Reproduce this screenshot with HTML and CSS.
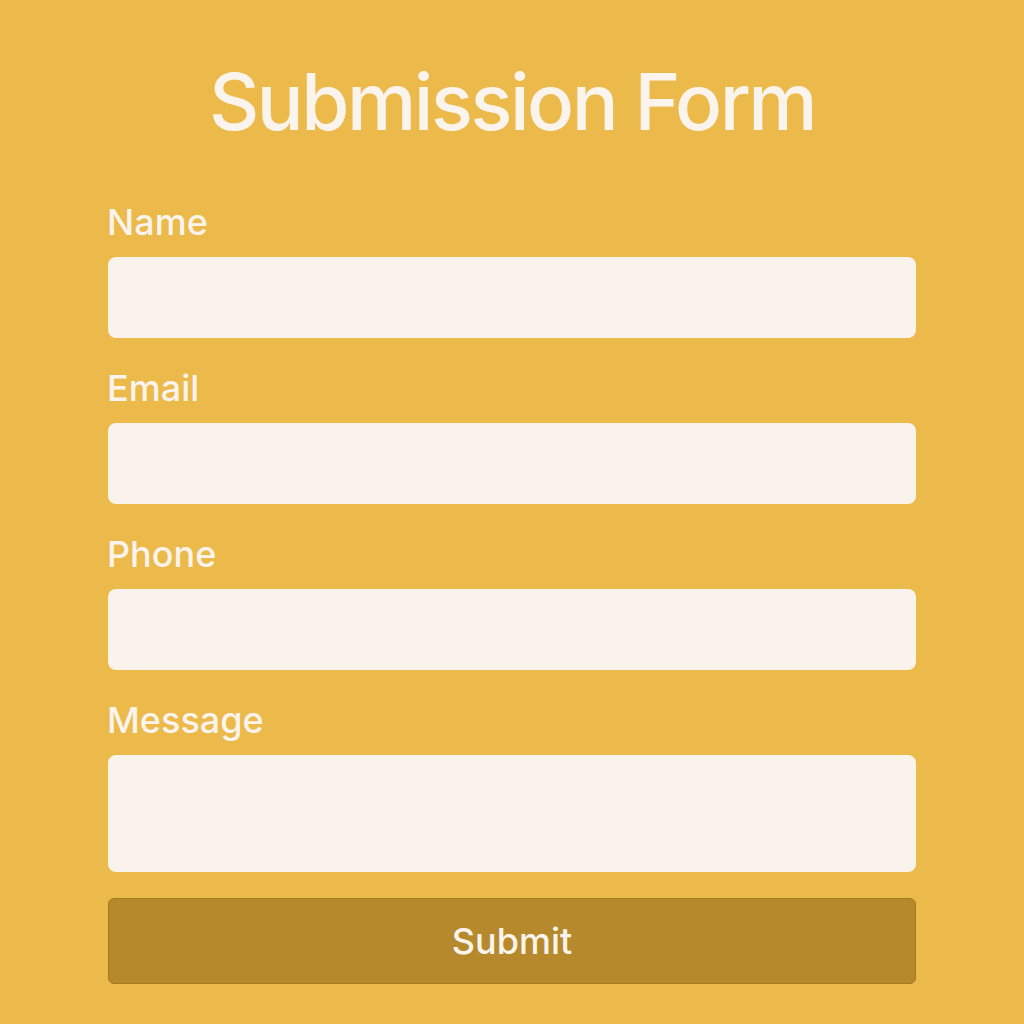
FILE: index.html
```html
<!DOCTYPE html>
<html>
<head>
<meta charset="utf-8">
<link rel="stylesheet" href="styles.css">
</head>
<body>
<div class="page">
  <h1 class="title">Submission Form</h1>
  <form class="form">
    <div class="field">
      <label class="label">Name</label>
      <div class="input"></div>
    </div>
    <div class="field">
      <label class="label">Email</label>
      <div class="input"></div>
    </div>
    <div class="field">
      <label class="label">Phone</label>
      <div class="input"></div>
    </div>
    <div class="field">
      <label class="label">Message</label>
      <div class="input textarea"></div>
    </div>
    <div class="button">Submit</div>
  </form>
</div>
</body>
</html>
```
FILE: styles.css
```css
html, body {
  margin: 0;
  padding: 0;
}
body {
  background: #ecb94b;
  font-family: Inter, "Noto Sans", sans-serif;
  color: #fbf4ec;
}
.page {
  width: 1024px;
  height: 1024px;
  box-sizing: border-box;
  padding-top: 54px;
}
.title {
  margin: 0;
  text-align: center;
  font-size: 78px;
  font-weight: 500;
  line-height: 96px;
  letter-spacing: -2.5px;
}
.form {
  margin: 51px 108px 0 108px;
  display: flex;
  flex-direction: column;
}
.field {
  display: flex;
  flex-direction: column;
  gap: 13px;
  margin-bottom: 29px;
}
.label {
  font-size: 36px;
  line-height: 43px;
  font-weight: 500;
  margin-left: -1px;
}
.input {
  height: 81px;
  background: #faf3ec;
  border-radius: 8px;
}
.textarea {
  height: 117px;
}
.button {
  margin-top: -3px;
  height: 84px;
  background: #b5892c;
  border: 1px solid #a47a22;
  border-radius: 6px;
  display: flex;
  align-items: center;
  justify-content: center;
  font-size: 36px;
  font-weight: 500;
  color: #fbf4ec;
}
```
